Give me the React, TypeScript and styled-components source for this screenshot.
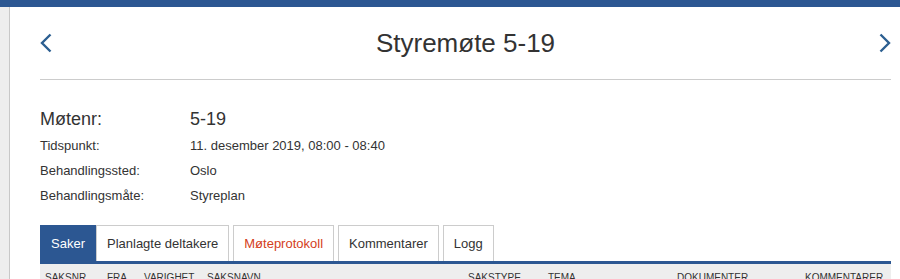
import React from "react";
import styled, { createGlobalStyle } from "styled-components";

const GlobalStyle = createGlobalStyle`
  html, body {
    margin: 0;
    padding: 0;
    background: #ffffff;
  }
  body {
    font-family: "Liberation Sans", Helvetica, Arial, sans-serif;
    color: #333333;
    overflow: hidden;
  }
`;

const TopBar = styled.div`
  height: 7px;
  background: #2c5792;
`;

const Layout = styled.div`
  display: flex;
  min-height: 272px;
`;

const SideStrip = styled.div`
  width: 9px;
  background: #eeeeee;
  border-right: 1px solid #c8c8c8;
`;

const Main = styled.main`
  flex: 1;
  padding: 0 9px 0 30px;
`;

const Header = styled.header`
  display: flex;
  align-items: center;
  justify-content: space-between;
  height: 72px;
  border-bottom: 1px solid #cccccc;
`;

const NavButton = styled.button`
  display: flex;
  align-items: center;
  justify-content: center;
  width: 12px;
  height: 20px;
  padding: 0;
  border: none;
  background: none;
  cursor: pointer;
  color: #2c5f91;
`;

const Title = styled.h1`
  margin: 0;
  font-size: 26px;
  font-weight: normal;
  color: #333333;
`;

const Details = styled.dl`
  display: grid;
  grid-template-columns: 150px 1fr;
  grid-template-rows: 27px;
  grid-auto-rows: 25px;
  align-items: center;
  margin: 26px 0 0;
`;

const Term = styled.dt<{ $big?: boolean }>`
  margin: 0;
  font-size: ${(p) => (p.$big ? "18px" : "13px")};
`;

const Value = styled.dd<{ $big?: boolean }>`
  margin: 0;
  font-size: ${(p) => (p.$big ? "18px" : "13px")};
`;

const Tabs = styled.ul`
  display: flex;
  gap: 4px;
  list-style: none;
  margin: 17px 0 0;
  padding: 0;
  border-bottom: 3px solid #2c5792;
`;

const Tab = styled.li<{ $active?: boolean; $alert?: boolean }>`
  height: 36px;
  box-sizing: border-box;
  display: flex;
  align-items: center;
  padding: 0 10px;
  font-size: 13px;
  white-space: nowrap;
  border: 1px solid ${(p) => (p.$active ? "#2c5792" : "#cccccc")};
  border-bottom: none;
  background: ${(p) => (p.$active ? "#2c5792" : "#ffffff")};
  color: ${(p) => (p.$active ? "#ffffff" : p.$alert ? "#d4401b" : "#333333")};
  margin-right: ${(p) => (p.$active ? "-4px" : "0")};
`;

const TableHead = styled.div`
  display: grid;
  grid-template-columns: 62px 37px 63px 261px 80px 129px 128px 1fr;
  background: #eeeeee;
  padding: 8px 0 0 5px;
  height: 30px;
  box-sizing: border-box;
`;

const HeadCell = styled.span`
  font-size: 10px;
  text-transform: uppercase;
  color: #333333;
  white-space: nowrap;
`;

const Chevron = ({ dir }: { dir: "left" | "right" }) => (
  <svg width="12" height="20" viewBox="0 0 12 20" fill="none">
    <path
      d={dir === "left" ? "M10.5 1.5 L2 10 L10.5 18.5" : "M1.5 1.5 L10 10 L1.5 18.5"}
      stroke="currentColor"
      strokeWidth="2.4"
    />
  </svg>
);

const details = [
  { label: "Tidspunkt:", value: "11. desember 2019, 08:00 - 08:40" },
  { label: "Behandlingssted:", value: "Oslo" },
  { label: "Behandlingsmåte:", value: "Styreplan" },
];

const tabs = [
  { label: "Saker", active: true },
  { label: "Planlagte deltakere" },
  { label: "Møteprotokoll", alert: true },
  { label: "Kommentarer" },
  { label: "Logg" },
];

const columns = [
  "Saksnr.",
  "Fra",
  "Varighet",
  "Saksnavn",
  "Sakstype",
  "Tema",
  "Dokumenter",
  "Kommentarer",
];

export default function App() {
  return (
    <>
      <GlobalStyle />
      <TopBar />
      <Layout>
        <SideStrip />
        <Main>
          <Header>
            <NavButton aria-label="Forrige møte">
              <Chevron dir="left" />
            </NavButton>
            <Title>Styremøte 5-19</Title>
            <NavButton aria-label="Neste møte">
              <Chevron dir="right" />
            </NavButton>
          </Header>
          <Details>
            <Term $big>Møtenr:</Term>
            <Value $big>5-19</Value>
            {details.map((d) => (
              <React.Fragment key={d.label}>
                <Term>{d.label}</Term>
                <Value>{d.value}</Value>
              </React.Fragment>
            ))}
          </Details>
          <Tabs>
            {tabs.map((t) => (
              <Tab key={t.label} $active={t.active} $alert={t.alert}>
                {t.label}
              </Tab>
            ))}
          </Tabs>
          <TableHead>
            {columns.map((c) => (
              <HeadCell key={c}>{c}</HeadCell>
            ))}
          </TableHead>
        </Main>
      </Layout>
    </>
  );
}
